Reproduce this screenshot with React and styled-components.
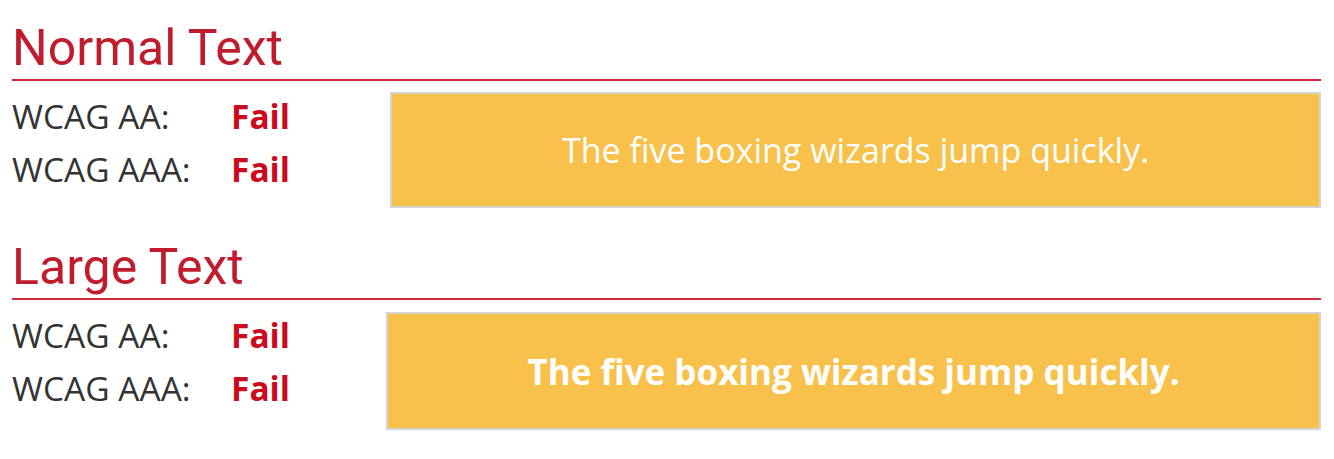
import React from 'react';
import styled, { createGlobalStyle } from 'styled-components';

const GlobalStyle = createGlobalStyle`
  body {
    margin: 0;
    background: #fff;
    font-family: "Open Sans", "Liberation Sans", sans-serif;
  }
`

const Page = styled.div`
  padding: 19px 13px 0 12px;
`

const Section = styled.section`
  margin-top: ${props => props.$first ? '0' : '30px'};
`

const Heading = styled.h2`
  margin: 0;
  padding-bottom: 2px;
  border-bottom: 2px solid #d22a3b;
  font-family: Roboto, "Liberation Sans", sans-serif;
  font-weight: 400;
  font-size: 50px;
  line-height: 58px;
  color: #c11b2e;
`

const Results = styled.div`
  display: flex;
  align-items: flex-start;
  margin-top: 9px;
`

const Criteria = styled.div`
  display: grid;
  grid-template-columns: 219px auto;
  font-size: 33.5px;
  line-height: 53px;
  color: #333;
`

const Level = styled.span``

const Verdict = styled.span`
  font-weight: 700;
  color: #cc0a1d;
`

const Sample = styled.div`
  flex: 1;
  display: flex;
  align-items: center;
  justify-content: center;
  box-sizing: border-box;
  height: ${props => props.$height}px;
  margin-top: ${props => props.$offset}px;
  margin-left: ${props => props.$gap}px;
  background: #f8c14b;
  border: 2px solid #d4d4d4;
  color: #fff;
  font-size: ${props => props.$bold ? 35 : 34}px;
  font-weight: ${props => props.$bold ? 700 : 400};
`

const sections = [
  { title: 'Normal Text', bold: false, gap: 100, height: 116, offset: 2 },
  { title: 'Large Text', bold: true, gap: 96, height: 118, offset: 3 },
]

export default function App() {
  return (
    <Page>
      <GlobalStyle />
      {sections.map((s, i) => (
        <Section key={s.title} $first={i === 0}>
          <Heading>{s.title}</Heading>
          <Results>
            <Criteria>
              <Level>WCAG AA:</Level>
              <Verdict>Fail</Verdict>
              <Level>WCAG AAA:</Level>
              <Verdict>Fail</Verdict>
            </Criteria>
            <Sample $bold={s.bold} $gap={s.gap} $height={s.height} $offset={s.offset}>
              The five boxing wizards jump quickly.
            </Sample>
          </Results>
        </Section>
      ))}
    </Page>
  )
}
